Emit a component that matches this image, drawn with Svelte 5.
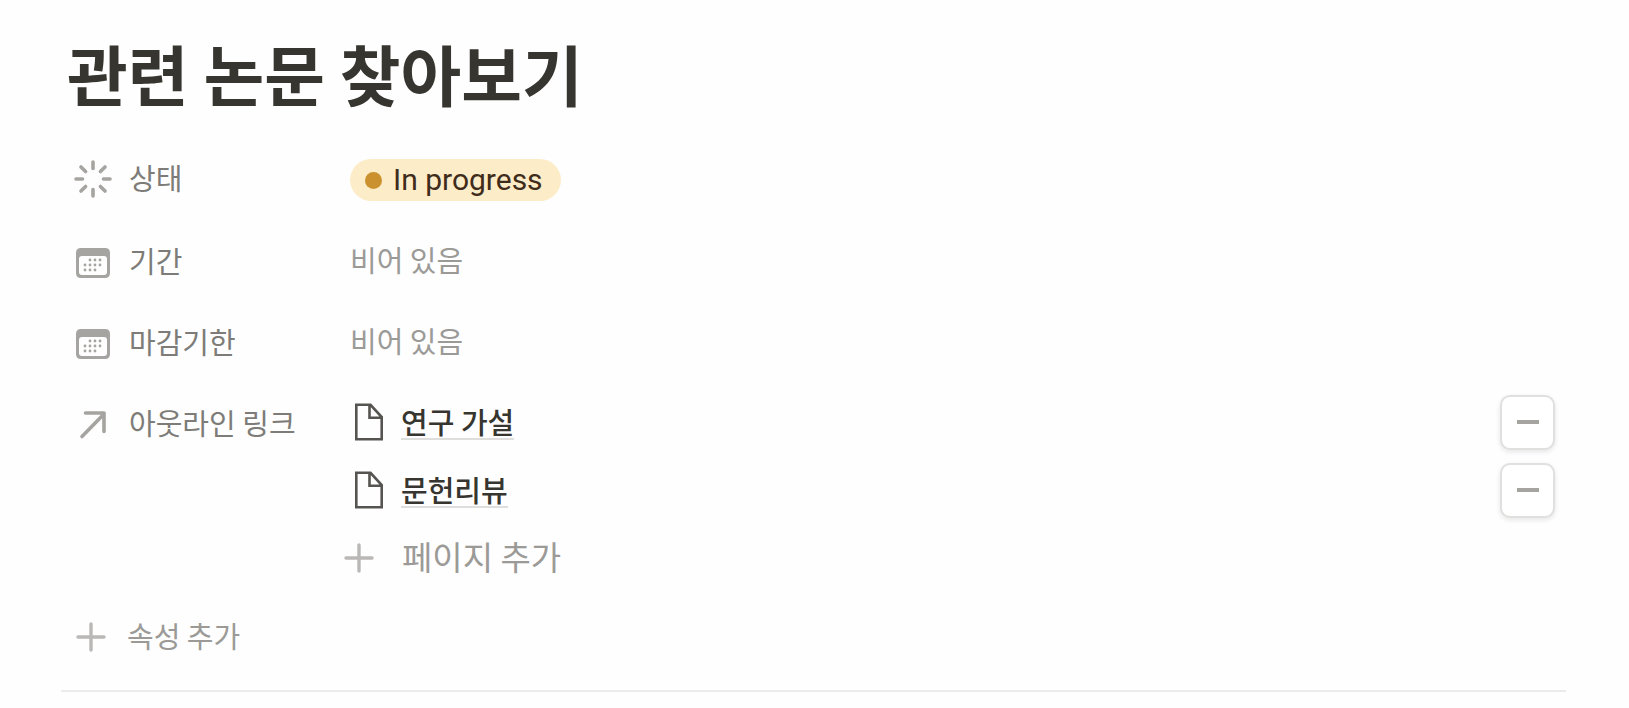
<script lang="ts">
  let pages = $state(["연구 가설", "문헌리뷰"]);

  const dates = ["기간", "마감기한"];
  const angles = [0, 45, 90, 135, 180, 225, 270, 315];
  const dots = [
    [15, 13], [20, 13], [25, 13],
    [10, 18], [15, 18], [20, 18], [25, 18],
    [10, 23], [15, 23], [20, 23],
  ];

  function addPage() {
    pages.push("제목 없음");
  }

  function removePage(index: number) {
    pages.splice(index, 1);
  }
</script>

{#snippet plus()}
  <svg class="plus" viewBox="0 0 30 30" aria-hidden="true">
    <path d="M15 2V28M2 15H28" />
  </svg>
{/snippet}

<main class="page">
  <h1>관련 논문 찾아보기</h1>

  <div class="row">
    <div class="label">
      <svg class="icon" viewBox="0 0 38 38" aria-hidden="true">
        {#each angles as angle}
          <path class="ray" d="M19 2V8.5" transform="rotate({angle} 19 19)" />
        {/each}
      </svg>
      <span>상태</span>
    </div>
    <div class="value">
      <span class="status"><span class="dot"></span>In progress</span>
    </div>
  </div>

  {#each dates as name}
    <div class="row">
      <div class="label">
        <svg class="icon" viewBox="-2 -4 38 38" aria-hidden="true">
          <path
            class="calendar"
            fill-rule="evenodd"
            d="M5 1H29Q34 1 34 6V26Q34 31 29 31H5Q0 31 0 26V6Q0 1 5 1ZM6 9Q3 9 3 12V25Q3 28 6 28H28Q31 28 31 25V12Q31 9 28 9Z"
          />
          {#each dots as [x, y]}
            <circle class="day" cx={x - 1} cy={y} r="1.4" />
          {/each}
        </svg>
        <span>{name}</span>
      </div>
      <div class="value empty">비어 있음</div>
    </div>
  {/each}

  <div class="row">
    <div class="label">
      <svg class="icon" viewBox="0 0 38 38" aria-hidden="true">
        <path class="arrow" d="M8 31.5L30 9M11.5 8H30V26.5" />
      </svg>
      <span>아웃라인 링크</span>
    </div>
    <div class="value links">
      {#each pages as title, i}
        <div class="link-row">
          <svg class="file" viewBox="0 0 28 38" aria-hidden="true">
            <path d="M1.3 1.8H15.5L26.7 14V36.2H1.3ZM14.5 2V14.7H26.5" />
          </svg>
          <a href="#page-{i}">{title}</a>
          <button class="remove" aria-label="{title} 삭제" onclick={() => removePage(i)}>
            <svg viewBox="0 0 22 4" aria-hidden="true"><path d="M0 2H22" /></svg>
          </button>
        </div>
      {/each}
      <button class="add add-page" onclick={addPage}>
        {@render plus()}
        <span>페이지 추가</span>
      </button>
    </div>
  </div>

  <button class="add add-property">
    {@render plus()}
    <span>속성 추가</span>
  </button>
  <hr />
</main>

<style>
  :global(body) {
    margin: 0;
    background: #fefefe;
  }

  .page {
    padding: 24px 63px 16px 61px;
    color: #37352f;
    font-family: "Noto Sans CJK KR", sans-serif;
    font-size: 29px;
    line-height: 40px;
  }

  h1 {
    margin: 0 0 19px;
    padding-left: 6px;
    font-size: 66px;
    font-weight: 700;
    line-height: 96px;
  }

  .row {
    display: flex;
    align-items: flex-start;
    padding: 20px 11px 21px 13px;
  }

  .label {
    display: flex;
    align-items: center;
    gap: 17px;
    flex: 0 0 276px;
    color: #7d7c78;
  }

  .label span,
  .add span {
    padding-bottom: 4px;
    line-height: 36px;
  }

  .value {
    flex: 1;
    min-width: 0;
  }

  .icon {
    width: 38px;
    height: 38px;
  }

  .ray,
  .arrow {
    fill: none;
    stroke: #a5a4a0;
    stroke-width: 3.6;
    stroke-linecap: round;
    stroke-linejoin: round;
  }

  .calendar,
  .day {
    fill: #a5a4a0;
  }

  .empty {
    color: #9b9a97;
    line-height: 34px;
  }

  .status {
    display: inline-flex;
    align-items: center;
    gap: 11px;
    height: 42px;
    padding: 0 18px 0 15px;
    border-radius: 21px;
    background: #fdecc8;
    color: #402c1b;
    font-family: Roboto, sans-serif;
    font-size: 30px;
    vertical-align: top;
  }

  .dot {
    width: 17px;
    height: 17px;
    border-radius: 50%;
    background: #cb912f;
  }

  .links {
    margin-top: -16px;
  }

  .link-row {
    display: flex;
    align-items: center;
    height: 68px;
    padding-left: 5px;
  }

  .file {
    width: 28px;
    height: 38px;
    margin-right: 18px;
    fill: none;
    stroke: #555450;
    stroke-width: 2.6;
  }

  a {
    border-bottom: 2px solid #dededc;
    color: inherit;
    font-weight: 500;
    line-height: 34px;
    text-decoration: none;
  }

  button {
    font: inherit;
    cursor: pointer;
  }

  .remove {
    display: flex;
    align-items: center;
    justify-content: center;
    width: 55px;
    height: 55px;
    margin-left: auto;
    padding: 0;
    border: 2px solid #e0e0df;
    border-radius: 10px;
    background: #fff;
    box-shadow: 0 2px 5px rgba(15, 15, 15, 0.1);
  }

  .remove svg {
    width: 22px;
    height: 4px;
    stroke: #a5a4a0;
    stroke-width: 4;
  }

  .add {
    display: flex;
    align-items: center;
    padding: 0;
    border: 0;
    background: none;
    color: #9b9a97;
  }

  .plus {
    width: 30px;
    height: 30px;
    fill: none;
    stroke: #b9b8b6;
    stroke-width: 3.4;
    stroke-linecap: round;
  }

  .add-page {
    gap: 28px;
    height: 68px;
    margin-left: -6px;
    font-size: 33px;
  }

  .add-property {
    gap: 21px;
    margin-top: 4px;
    padding-left: 15px;
  }

  hr {
    height: 2px;
    margin: 33px 0 0;
    border: 0;
    background: #ebebea;
  }
</style>
